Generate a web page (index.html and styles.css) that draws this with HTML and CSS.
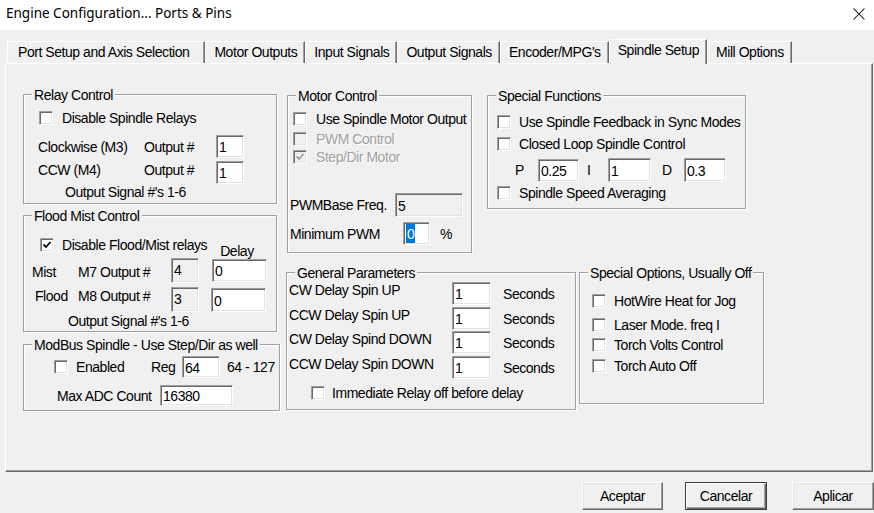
FILE: index.html
```html
<!DOCTYPE html>
<html lang="en">
<head>
<meta charset="utf-8">
<title>Engine Configuration... Ports &amp; Pins</title>
<link rel="stylesheet" href="styles.css">
</head>
<body>
<div class="window">
  <div class="titlebar">
    <span class="title">Engine Configuration... Ports &amp; Pins</span>
    <svg class="close" width="12" height="12" viewBox="0 0 12 12"><path d="M0.5 0.5L11.5 11.5M11.5 0.5L0.5 11.5" stroke="#000" stroke-width="1.05" fill="none"/></svg>
  </div>

  <div class="tabs">
    <div class="tab tab-first">Port Setup and Axis Selection</div>
    <div class="tab">Motor Outputs</div>
    <div class="tab">Input Signals</div>
    <div class="tab">Output Signals</div>
    <div class="tab">Encoder/MPG's</div>
    <div class="tab active">Spindle Setup</div>
    <div class="tab">Mill Options</div>
  </div>

  <div class="panel">
    <div class="col-left">
      <div class="group g-relay">
        <span class="legend">Relay Control</span>
        <div class="chk r-chk"><span class="box"></span><span class="lbl">Disable Spindle Relays</span></div>
        <div class="frow r-row1"><span class="t r-name">Clockwise (M3)</span><span class="t r-out">Output #</span><span class="field r-f">1</span></div>
        <div class="frow top r-row2"><span class="t r-name">CCW (M4)</span><span class="t r-out">Output #</span><span class="field r-f">1</span></div>
        <div class="t r-note">Output Signal #'s 1-6</div>
      </div>

      <div class="group g-flood">
        <span class="legend">Flood Mist Control</span>
        <div class="f-head">
          <span class="box on"><svg width="12" height="12" viewBox="0 0 12 12"><path d="M2.5 5.5L5 8L9.5 3" stroke="#000" stroke-width="1.8" fill="none"/></svg></span>
          <span class="lbl">Disable Flood/Mist relays</span>
          <span class="t f-delay">Delay</span>
        </div>
        <div class="frow top f-row"><span class="t f-mist">Mist</span><span class="t f-out">M7 Output #</span><span class="field dis f-num">4</span><span class="field f-del">0</span></div>
        <div class="frow top f-row2"><span class="t f-flood">Flood</span><span class="t f-out">M8 Output #</span><span class="field dis f-num">3</span><span class="field f-del2">0</span></div>
        <div class="t f-note">Output Signal #'s 1-6</div>
      </div>

      <div class="group g-modbus">
        <span class="legend">ModBus Spindle - Use Step/Dir as well</span>
        <div class="frow m-row1"><span class="box"></span><span class="t m-en">Enabled</span><span class="t m-reg">Reg</span><span class="field m-f1">64</span><span class="t m-range">64 - 127</span></div>
        <div class="frow m-row2"><span class="t m-max">Max ADC Count</span><span class="field m-f2">16380</span></div>
      </div>
    </div>

    <div class="col-right">
      <div class="row-top">
        <div class="group g-motor">
          <span class="legend">Motor Control</span>
          <div class="chk mo-c1"><span class="box"></span><span class="lbl">Use Spindle Motor Output</span></div>
          <div class="chk dis mo-c2"><span class="box"></span><span class="lbl">PWM Control</span></div>
          <div class="chk dis mo-c3"><span class="box on"><svg width="12" height="12" viewBox="0 0 12 12"><path d="M2.5 5.5L5 8L9.5 3" stroke="#a0a0a0" stroke-width="1.8" fill="none"/></svg></span><span class="lbl">Step/Dir Motor</span></div>
          <div class="frow mo-r1"><span class="t mo-l1">PWMBase Freq.</span><span class="field dis mo-f1">5</span></div>
          <div class="frow mo-r2"><span class="t mo-l2">Minimum PWM</span><span class="field mo-f2"><span class="sel">0</span></span><span class="t mo-pct">%</span></div>
        </div>

        <div class="group g-sf">
          <span class="legend">Special Functions</span>
          <div class="chk sf-c1"><span class="box"></span><span class="lbl clip">Use Spindle Feedback in Sync Modes</span></div>
          <div class="chk sf-c2"><span class="box"></span><span class="lbl">Closed Loop Spindle Control</span></div>
          <div class="frow sf-pid">
            <span class="t sf-p">P</span><span class="field sf-fp">0.25</span>
            <span class="t sf-i">I</span><span class="field sf-fi">1</span>
            <span class="t sf-d">D</span><span class="field sf-fd">0.3</span>
          </div>
          <div class="chk sf-c3"><span class="box"></span><span class="lbl">Spindle Speed Averaging</span></div>
        </div>
      </div>

      <div class="row-bottom">
        <div class="group g-gen">
          <span class="legend">General Parameters</span>
          <div class="frow top g-r g-r1"><span class="t g-l">CW Delay Spin UP</span><span class="field g-f">1</span><span class="t g-s">Seconds</span></div>
          <div class="frow top g-r g-r2"><span class="t g-l">CCW Delay Spin UP</span><span class="field g-f">1</span><span class="t g-s">Seconds</span></div>
          <div class="frow top g-r g-r3"><span class="t g-l">CW Delay Spind DOWN</span><span class="field g-f">1</span><span class="t g-s">Seconds</span></div>
          <div class="frow top g-r g-r4"><span class="t g-l">CCW Delay Spin DOWN</span><span class="field g-f">1</span><span class="t g-s">Seconds</span></div>
          <div class="chk g-c"><span class="box"></span><span class="lbl">Immediate Relay off before delay</span></div>
        </div>

        <div class="group g-so">
          <span class="legend">Special Options, Usually Off</span>
          <div class="chk so-c1"><span class="box"></span><span class="lbl">HotWire Heat for Jog</span></div>
          <div class="chk so-c2"><span class="box"></span><span class="lbl">Laser Mode. freq I</span></div>
          <div class="chk so-c3"><span class="box"></span><span class="lbl">Torch Volts Control</span></div>
          <div class="chk so-c4"><span class="box"></span><span class="lbl">Torch Auto Off</span></div>
        </div>
      </div>
    </div>
  </div>

  <div class="buttons">
    <div class="btn">Aceptar</div>
    <div class="btn btn-default">Cancelar</div>
    <div class="btn btn-apply">Aplicar</div>
  </div>
</div>
</body>
</html>
```

FILE: styles.css
```css
html, body {
  margin: 0;
  padding: 0;
}
body {
  width: 874px;
  height: 513px;
  overflow: hidden;
  background: #f0f0f0;
  color: #000;
  font-family: "Liberation Sans", Arial, sans-serif;
  font-size: 14px;
  letter-spacing: -0.45px;
  line-height: 18px;
}
.window {
  width: 874px;
  height: 513px;
}

/* title bar */
.titlebar {
  height: 30px;
  background: #fff;
  display: flex;
  align-items: flex-start;
}
.title {
  font-family: "Noto Sans", "Open Sans", sans-serif;
  font-size: 13.5px;
  letter-spacing: 0;
  line-height: 19px;
  margin: 4px 0 0 6px;
  white-space: nowrap;
}
.close {
  margin: 8px 9px 0 auto;
}

/* tabs */
.tabs {
  display: flex;
  align-items: flex-end;
  height: 24px;
  margin-top: 9px;
  padding-left: 7px;
  position: relative;
  z-index: 1;
}
.tab {
  box-sizing: border-box;
  height: 22px;
  line-height: 20px;
  padding: 0 7px 0 8px;
  border-top: 1px solid #fff;
  border-left: 1px solid #fff;
  border-right: 1px solid #696969;
  box-shadow: inset -1px 0 0 #a0a0a0;
  white-space: nowrap;
}
.tab-first {
  padding: 0 15px 0 10px;
}
.tab.active {
  height: 25px;
  line-height: 21px;
  margin-bottom: -1px;
  background: #f0f0f0;
}

/* panel */
.panel {
  box-sizing: border-box;
  display: flex;
  align-items: flex-start;
  margin-left: 5px;
  width: 868px;
  height: 409px;
  padding: 30px 0 0 17px;
  border-top: 1px solid #fff;
  border-left: 1px solid #fff;
  border-right: 1px solid #696969;
  border-bottom: 1px solid #696969;
  box-shadow: inset -1px -1px 0 #a0a0a0;
}
.col-left {
  display: flex;
  flex-direction: column;
  align-items: flex-start;
  width: 257px;
}
.col-right {
  margin-left: 6px;
  padding-top: 1px;
}
.row-top,
.row-bottom {
  display: flex;
  align-items: flex-start;
}
.row-bottom {
  margin-top: 19px;
}

/* group boxes */
.group {
  position: relative;
  box-sizing: border-box;
  border: 1px solid #a0a0a0;
  box-shadow: inset 1px 1px 0 #fff, 1px 1px 0 #fff;
}
.legend {
  position: absolute;
  top: -9px;
  left: 8px;
  padding: 0 2px;
  background: #f0f0f0;
  line-height: 18px;
  white-space: nowrap;
}

/* generic controls */
.t {
  white-space: nowrap;
  flex: none;
}
.frow {
  display: flex;
  align-items: center;
}
.frow.top {
  align-items: flex-start;
}
.chk {
  display: flex;
  align-items: center;
  height: 14px;
}
.lbl {
  margin-left: 8px;
  line-height: 18px;
  white-space: nowrap;
}
.box {
  box-sizing: border-box;
  flex: none;
  width: 14px;
  height: 14px;
  background: #fff;
  border: 1px solid;
  border-color: #a0a0a0 #fff #fff #a0a0a0;
  box-shadow: inset 1px 1px 0 #696969, inset -1px -1px 0 #e3e3e3;
  display: flex;
  align-items: center;
  justify-content: center;
}
.box svg {
  display: block;
}
.chk.dis .box {
  background: #f0f0f0;
}
.chk.dis .lbl {
  color: #a0a0a0;
  text-shadow: 1px 1px 0 #fff;
}
.field {
  box-sizing: border-box;
  flex: none;
  display: flex;
  align-items: center;
  padding: 1px 0 0 2px;
  background: #fff;
  border: 1px solid;
  border-color: #a0a0a0 #fff #fff #a0a0a0;
  box-shadow: inset 1px 1px 0 #696969, inset -1px -1px 0 #e3e3e3;
  line-height: 18px;
  white-space: nowrap;
  overflow: hidden;
}
.field.dis {
  background: #f0f0f0;
}
.sel {
  background: #0078d7;
  color: #fff;
  align-self: stretch;
  display: flex;
  align-items: center;
  margin: 1px 0 1px 0;
  padding: 0 1px;
}

/* relay control */
.g-relay { width: 254px; height: 110px; }
.r-chk { margin: 16px 0 0 15px; }
.r-chk .lbl { margin-left: 9px; }
.r-row1 { margin: 10px 0 0 14px; height: 23px; }
.r-row2 { margin: 3px 0 0 14px; }
.r-name { width: 106px; }
.r-out { width: 72px; }
.r-f { width: 28px; height: 23px; }
.r-note { margin: -1px 0 0 41px; }

/* flood mist */
.g-flood { width: 254px; height: 117px; margin-top: 11px; }
.f-head {
  display: flex;
  align-items: flex-start;
  height: 20px;
  margin: 22px 0 0 16px;
}
.f-head .lbl { line-height: 14px; }
.f-delay { line-height: 14px; margin: 6px 0 0 13px; }
.f-row { margin: 0 0 0 8px; }
.f-row .t { margin-top: 5px; }
.f-row2 { margin: 4px 0 0 11px; }
.f-mist { width: 46px; }
.f-flood { width: 43px; }
.f-out { width: 93px; }
.f-num { width: 28px; height: 25px; align-items: flex-start; padding-top: 2px; }
.f-del { width: 55px; height: 23px; margin: 1px 0 0 13px; }
.f-del2 { width: 55px; height: 24px; margin: 1px 0 0 12px; }
.f-note { margin: 0 0 0 44px; }

/* modbus */
.g-modbus { width: 257px; height: 67px; margin-top: 12px; }
.m-row1 { margin: 11px 0 0 30px; height: 22px; }
.m-en { margin-left: 8px; width: 75px; }
.m-reg { width: 31px; }
.m-f1 { width: 38px; height: 22px; }
.m-range { margin-left: 7px; }
.m-row2 { margin: 7px 0 0 33px; }
.m-max { width: 103px; }
.m-f2 { width: 73px; height: 21px; }

/* motor control */
.g-motor { width: 185px; height: 158px; margin-left: 1px; }
.g-motor .lbl { margin-left: 9px; }
.mo-c1 { margin: 16px 0 0 5px; }
.mo-c2 { margin: 6px 0 0 5px; }
.mo-c3 { margin: 4px 0 0 5px; }
.mo-r1 { margin: 29px 0 0 2px; }
.mo-l1 { width: 105px; }
.mo-f1 { width: 68px; height: 24px; }
.mo-r2 { margin: 5px 0 0 2px; }
.mo-l2 { width: 113px; }
.mo-f2 { width: 27px; height: 23px; padding-top: 0; }
.mo-pct { margin-left: 10px; }

/* special functions */
.g-sf { width: 259px; height: 114px; margin-left: 15px; }
.sf-c1 { margin: 19px 0 0 9px; }
.sf-c2 { margin: 8px 0 0 9px; }
.sf-c3 { margin: 4px 0 0 9px; }
.clip { width: 224px; overflow: hidden; }
.sf-pid { margin: 7px 0 0 27px; height: 24px; }
.sf-p { width: 23px; }
.sf-fp { width: 41px; height: 23px; }
.sf-i { width: 21px; margin-left: 8px; }
.sf-fi { width: 43px; height: 24px; }
.sf-d { width: 22px; margin-left: 11px; }
.sf-fd { width: 42px; height: 24px; }

/* general parameters */
.g-gen { width: 290px; height: 138px; }
.g-r { margin-left: 2px; }
.g-r1 { margin-top: 9px; }
.g-r2 { margin-top: 2px; }
.g-r3 { margin-top: 1px; }
.g-r4 { margin-top: 2px; }
.g-l { width: 163px; margin-top: -1px; }
.g-f { width: 39px; height: 23px; }
.g-s { margin: 3px 0 0 12px; }
.g-c { margin: 7px 0 0 24px; }
.g-c .lbl { margin-left: 7px; }

/* special options */
.g-so { width: 185px; height: 132px; margin-left: 3px; }
.so-c1 { margin: 21px 0 0 12px; }
.so-c2 { margin: 10px 0 0 12px; }
.so-c3 { margin: 6px 0 0 12px; }
.so-c4 { margin: 7px 0 0 12px; }

/* buttons */
.buttons {
  display: flex;
  margin: 10px 0 0 582px;
}
.btn {
  box-sizing: border-box;
  width: 81px;
  height: 28px;
  display: flex;
  align-items: center;
  justify-content: center;
  padding-bottom: 1px;
  background: #f0f0f0;
  border: 1px solid;
  border-color: #fff #696969 #696969 #fff;
  box-shadow: inset -1px -1px 0 #a0a0a0, inset 1px 1px 0 #e3e3e3;
}
.btn-default {
  width: 82px;
  margin-left: 22px;
  border: 1px solid #3c3c3c;
  box-shadow: inset 1px 1px 0 #fff, inset -1px -1px 0 #696969, inset -2px -2px 0 #a0a0a0;
}
.btn-apply {
  width: 82px;
  margin-left: 25px;
}
```
